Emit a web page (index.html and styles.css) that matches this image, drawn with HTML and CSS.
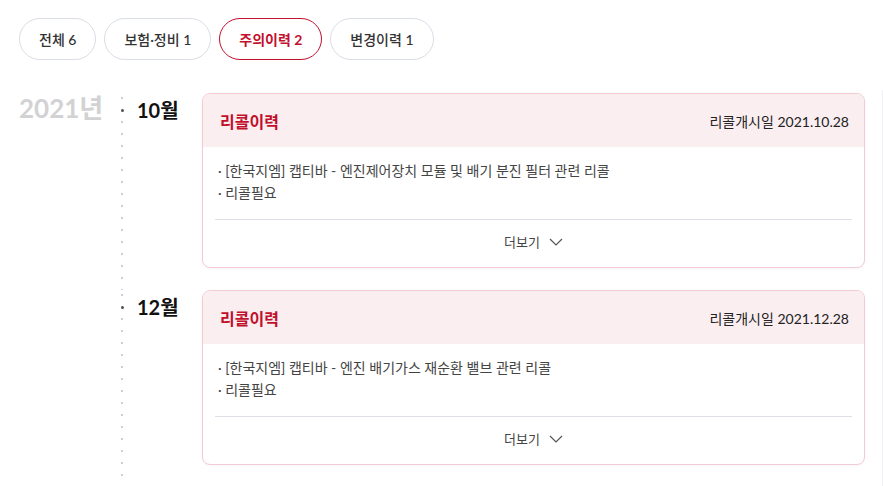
FILE: index.html
```html
<!DOCTYPE html>
<html lang="ko">
<head>
<meta charset="utf-8">
<link rel="stylesheet" href="styles.css">
</head>
<body>
<nav class="tabs">
  <button class="tab">전체 6</button>
  <button class="tab">보험·정비 1</button>
  <button class="tab active">주의이력 2</button>
  <button class="tab">변경이력 1</button>
</nav>
<section class="history">
  <div class="year">2021년</div>
  <div class="entries">
    <div class="entry">
      <div class="month">10월</div>
      <article class="card">
        <header class="card-head">
          <h3 class="card-title">리콜이력</h3>
          <span class="card-date">리콜개시일 2021.10.28</span>
        </header>
        <ul class="card-body">
          <li>· [한국지엠] 캡티바 - 엔진제어장치 모듈 및 배기 분진 필터 관련 리콜</li>
          <li>· 리콜필요</li>
        </ul>
        <div class="card-foot">
          <span>더보기</span>
          <svg class="chev" width="14" height="8" viewBox="0 0 14 8"><path d="M1 1 L7 7 L13 1" fill="none" stroke="#555" stroke-width="1.2"/></svg>
        </div>
      </article>
    </div>
    <div class="entry">
      <div class="month">12월</div>
      <article class="card">
        <header class="card-head">
          <h3 class="card-title">리콜이력</h3>
          <span class="card-date">리콜개시일 2021.12.28</span>
        </header>
        <ul class="card-body">
          <li>· [한국지엠] 캡티바 - 엔진 배기가스 재순환 밸브 관련 리콜</li>
          <li>· 리콜필요</li>
        </ul>
        <div class="card-foot">
          <span>더보기</span>
          <svg class="chev" width="14" height="8" viewBox="0 0 14 8"><path d="M1 1 L7 7 L13 1" fill="none" stroke="#555" stroke-width="1.2"/></svg>
        </div>
      </article>
    </div>
  </div>
</section>
</body>
</html>
```
FILE: styles.css
```css
* { box-sizing: border-box; }
html, body { margin: 0; padding: 0; background: #fff; }
body {
  font-family: Lato, "Noto Sans CJK KR", sans-serif;
  color: #333;
  width: 883px;
  height: 486px;
  overflow: hidden;
}
.tabs {
  display: flex;
  gap: 8px;
  padding: 18px 19px 0;
}
.tab {
  height: 42px;
  padding: 0 19px;
  border: 1px solid #d9dde6;
  border-radius: 21px;
  background: #fff;
  font-family: Lato, "Noto Sans CJK KR", sans-serif;
  font-size: 14px;
  font-weight: 500;
  color: #333;
}
.tab.active {
  border-color: #c2102e;
  color: #c2102e;
  font-weight: 700;
}
.history {
  display: flex;
  margin-top: 30px;
  padding: 3px 17px 0 19px;
  border-right: 1px solid #f0f0f2;
}
.year {
  width: 96px;
  flex: none;
  font-size: 26px;
  font-weight: 700;
  color: #d2d2d4;
  line-height: 30px;
  letter-spacing: 0;
  white-space: nowrap;
}
.entries { flex: 1; }
.entry {
  position: relative;
  display: flex;
  padding-bottom: 22px;
  background-image: linear-gradient(#c9d0de 2px, transparent 2px);
  background-size: 2px 12px;
  background-repeat: repeat-y;
  background-position: 6px 4px;
}
.entry::before {
  content: "";
  position: absolute;
  left: 6px;
  top: 16px;
  width: 3px;
  height: 3px;
  border-radius: 50%;
  background: #555;
}
.month {
  width: 87px;
  flex: none;
  padding: 5px 0 0 22px;
  font-size: 20px;
  font-weight: 700;
  line-height: 24px;
  color: #111;
}
.card {
  flex: 1;
  background: #fff;
  border: 1px solid #f2cbd4;
  border-radius: 8px;
  overflow: hidden;
  box-shadow: 0 1px 3px rgba(0,0,0,0.04);
}
.card-head {
  height: 53px;
  display: flex;
  align-items: center;
  justify-content: space-between;
  padding: 0 15px 0 17px;
  background: #faeef1;
}
.card-title {
  margin: 0;
  font-size: 16px;
  font-weight: 700;
  color: #c0102c;
}
.card-date {
  font-size: 14px;
  color: #222;
}
.card-body {
  list-style: none;
  margin: 0 12px;
  padding: 13px 3px 15px;
  border-bottom: 1px solid #dde0e6;
  font-size: 14px;
  line-height: 22px;
  color: #444;
}
.card-foot {
  display: flex;
  justify-content: center;
  align-items: center;
  gap: 9px;
  padding: 12px 0 15px;
  font-size: 13px;
  line-height: 20px;
  color: #444;
}
.chev { display: block; }
```
